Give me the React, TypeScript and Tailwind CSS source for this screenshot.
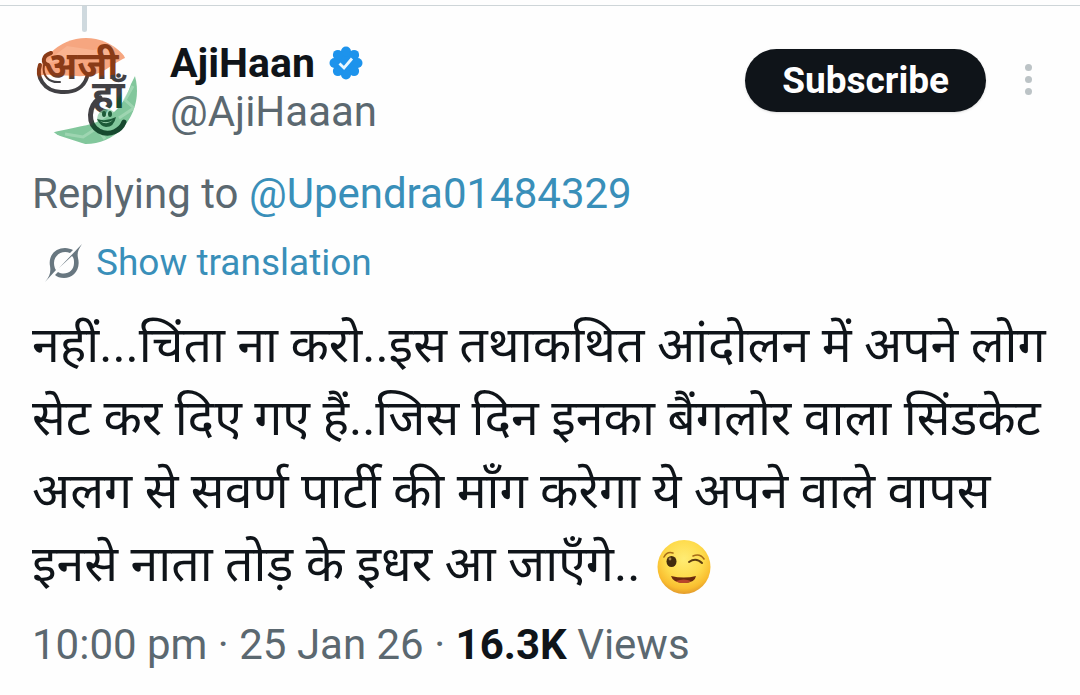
// Single post view: author header, reply context, body text and view count
import { MouseEvent } from 'react';

const post = {
  name: 'AjiHaan',
  handle: '@AjiHaaan',
  replyingTo: '@Upendra01484329',
  body: 'नहीं...चिंता ना करो..इस तथाकथित आंदोलन में अपने लोग सेट कर दिए गए हैं..जिस दिन इनका बैंगलोर वाला सिंडकेट अलग से सवर्ण पार्टी की माँग करेगा ये अपने वाले वापस इनसे नाता तोड़ के इधर आ जाएँगे..',
  time: '10:00 pm',
  date: '25 Jan 26',
  views: '16.3K',
};

function Avatar() {
  return (
    <svg viewBox="-3 0 106 106" className="size-[106px] shrink-0" role="img" aria-label={post.name}>
      <defs>
        <clipPath id="disc">
          <ellipse cx="51" cy="53" rx="51" ry="53" />
        </clipPath>
        {/* lettering darkens to match the flag colour behind it */}
        <linearGradient id="inkTop" gradientUnits="userSpaceOnUse" x1="0" y1="0" x2="0" y2="76">
          <stop offset="0.48" stopColor="#8a3b17" />
          <stop offset="0.54" stopColor="#414044" />
        </linearGradient>
        <linearGradient id="inkBottom" gradientUnits="userSpaceOnUse" x1="50" y1="40" x2="100" y2="90">
          <stop offset="0.5" stopColor="#414044" />
          <stop offset="0.56" stopColor="#17492f" />
        </linearGradient>
      </defs>
      <g clipPath="url(#disc)">
        <rect width="104" height="106" fill="#fefefe" />
        <path d="M0 38V0H82L90 20C78 25 68 37 51 38C34 39 17 35 0 38Z" fill="#f6a680" />
        <path d="M8 26L32 8L58 12L82 7L70 22L40 20Z" fill="#fbbf9f" opacity="0.5" />
        <path d="M104 30L96 46C90 64 82 76 62 84C48 89 34 90 16 95L50 106H104Z" fill="#82c79c" />
        <path d="M98 48L90 62L99 70L84 80M30 96L48 99L62 90L70 101" fill="none" stroke="#a9dbba" strokeWidth="3" opacity="0.7" />
      </g>
      <g fill="none" strokeLinecap="round">
        <path d="M16 15C7 18 7 25 13 27" stroke="url(#inkTop)" strokeWidth="4" />
        <path d="M5 27C1 38 8 53 26 54C40 55 49 49 52 39" stroke="url(#inkTop)" strokeWidth="4" />
        <path d="M9 27C7 38 14 45 25 44" stroke="url(#inkTop)" strokeWidth="2" />
        <path d="M65 60C53 68 52 86 64 93C75 99 86 92 89 84" stroke="url(#inkBottom)" strokeWidth="5" />
      </g>
      <g className="font-['Noto_Sans',sans-serif] font-bold">
        <text x="10" y="41" fontSize="38" fill="url(#inkTop)">अजी</text>
        <text x="57" y="70" fontSize="38" fill="url(#inkBottom)">हाँ</text>
      </g>
      {/* small face inside the lower swirl */}
      <circle cx="72" cy="81" r="10" fill="#82c79c" opacity="0.7" />
      <g fill="#1d5a38">
        <ellipse cx="69" cy="76" rx="2" ry="3" />
        <ellipse cx="75" cy="76" rx="2" ry="3" />
        <path d="M62 81Q71 84 81 79Q79 89 71 89Q65 88 62 81Z" />
      </g>
      <path d="M65 83Q72 86 78 82Q72 88 65 83Z" fill="#a9dbba" />
    </svg>
  );
}

function VerifiedBadge() {
  return (
    <svg viewBox="0 0 34 34" className="size-[34px] shrink-0" role="img" aria-label="Verified">
      <g fill="#1d93ec">
        <circle cx="17" cy="17" r="13" />
        <circle cx="17" cy="5.5" r="5" />
        <circle cx="25.1" cy="8.9" r="5" />
        <circle cx="28.5" cy="17" r="5" />
        <circle cx="25.1" cy="25.1" r="5" />
        <circle cx="17" cy="28.5" r="5" />
        <circle cx="8.9" cy="25.1" r="5" />
        <circle cx="5.5" cy="17" r="5" />
        <circle cx="8.9" cy="8.9" r="5" />
      </g>
      <path d="M10.5 17.5L15 22L23 12.5" fill="none" stroke="#e8f7ff" strokeWidth="2.8" />
    </svg>
  );
}

function GrokIcon() {
  return (
    <svg viewBox="0 0 40 40" className="size-10 shrink-0" fill="#687780" aria-hidden="true">
      <path d="M38 1C34 7 33 10 34 15C37 27 29 35 20 35C16 35 13 34 11 32L14 29C21 33 30 29 30 20C30 17 30 15 28 13L15 25Z" />
      <path d="M1 39C6 33 7 29 6 23C4 12 12 5 21 5C24 5 27 6 29 7L26 10C18 7 10 12 10 20C10 23 11 26 12 27Z" />
    </svg>
  );
}

function WinkEmoji() {
  return (
    <svg viewBox="0 0 54 56" className="ml-1 inline-block h-14 w-[54px] align-[-14px]" role="img" aria-label="😉">
      <defs>
        <radialGradient id="face" cx="0.5" cy="0.35" r="0.65">
          <stop offset="0" stopColor="#ffec74" />
          <stop offset="0.55" stopColor="#fedb4c" />
          <stop offset="0.85" stopColor="#f9bd2f" />
          <stop offset="1" stopColor="#e39b2c" />
        </radialGradient>
      </defs>
      <ellipse cx="27" cy="28" rx="26.5" ry="27" fill="url(#face)" />
      <ellipse cx="14.5" cy="22.5" rx="5" ry="5.5" fill="#422b0d" />
      <circle cx="13" cy="20" r="1.4" fill="#a58752" />
      <path d="M7 18Q10 12 16 14" fill="none" stroke="#a66b18" strokeWidth="1.6" strokeLinecap="round" />
      <path d="M32 23Q39 18 45 24" fill="none" stroke="#5c3c10" strokeWidth="2" strokeLinecap="round" />
      <path d="M36 17Q43 14 47 20" fill="none" stroke="#a66b18" strokeWidth="1.6" strokeLinecap="round" />
      <path d="M14 37Q27 40 39 37Q38 44 27 44Q16 44 14 37Z" fill="#6b2a0d" />
      <path d="M19 42Q27 39 34 42Q32 44 27 44Q21 44 19 42Z" fill="#b8452b" />
    </svg>
  );
}

function App() {
  const stay = (e: MouseEvent) => e.preventDefault();

  return (
    <div className="min-h-screen bg-[#fefefe] pt-[5px] font-['Roboto',sans-serif] text-[#0f1419]">
      <article className="border-t border-[#ced5d8] px-8">
        <div className="ml-[50px] h-[26px] w-[5px] rounded-b-sm bg-[#cfd9de]" />

        <header className="mt-1.5 flex items-start pr-2.5">
          <Avatar />
          <div className="ml-8 grow pt-px">
            <div className="flex items-center gap-3.5">
              <h1 className="text-[41px] leading-12 font-bold">{post.name}</h1>
              <VerifiedBadge />
            </div>
            <p className="text-[42px] leading-[50px] text-[#5b6870]">{post.handle}</p>
          </div>
          <button className="mt-[11px] h-[63px] rounded-full bg-[#0f1419] px-[37px] text-[37px] leading-10 font-bold text-white shadow">
            Subscribe
          </button>
          <button aria-label="More" className="mt-6 ml-8 flex w-5 flex-col items-center gap-[5px] pt-0.5">
            <span className="size-[7px] rounded-full bg-[#bcc3c6]" />
            <span className="size-[7px] rounded-full bg-[#bcc3c6]" />
            <span className="size-[7px] rounded-full bg-[#bcc3c6]" />
          </button>
        </header>

        <p className="mt-[26px] text-[42px] leading-12 text-[#5b6870]">
          Replying to{' '}
          <a href="#" onClick={stay} className="text-[#398fb9]">
            {post.replyingTo}
          </a>
        </p>

        <button className="mt-[25px] ml-3 flex items-center gap-3 text-[37px] leading-10 text-[#398fb9]">
          <GrokIcon />
          Show translation
        </button>

        <p className="mt-[26px] font-['Roboto','Noto_Sans',sans-serif] text-[50px] leading-[73px]">
          {post.body} <WinkEmoji />
        </p>

        <p className="mt-5 text-[42px] leading-12 text-[#5b6870]">
          {post.time} · {post.date} · <strong className="font-bold text-[#0f1419]">{post.views}</strong> Views
        </p>
      </article>
    </div>
  );
}

export default App;
